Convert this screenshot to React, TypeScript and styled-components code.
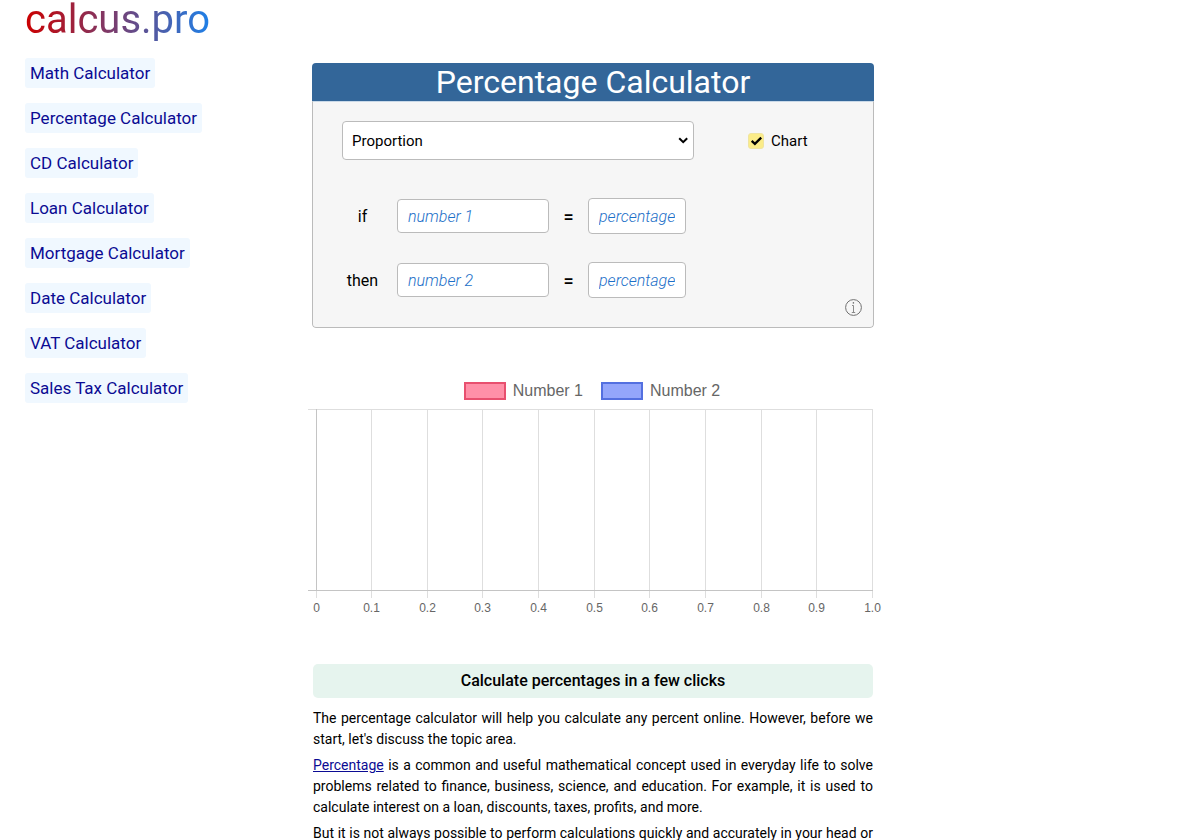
import React, { useState } from "react";
import styled, { createGlobalStyle } from "styled-components";

const GlobalStyle = createGlobalStyle`
  * { box-sizing: border-box; }
  body {
    margin: 0;
    background: #fff;
    color: #000;
    font-family: Roboto, "Liberation Sans", sans-serif;
    font-size: 16px;
  }
  input, select, button { font: inherit; color: inherit; }
`;

const Page = styled.div`
  display: grid;
  grid-template-columns: 287px minmax(0, 562px) 1fr;
  padding-left: 25px;
`;

const Sidebar = styled.aside`
  display: flex;
  flex-direction: column;
  align-items: flex-start;
`;

const Logo = styled.a`
  height: 44px;
  line-height: 40px;
  margin-bottom: 14px;
  font-size: 40px;
  text-decoration: none;
  color: transparent;
  background: linear-gradient(90deg, #cc0000, #1e80e8);
  background-clip: text;
`;

const Nav = styled.nav`
  display: flex;
  flex-direction: column;
  align-items: flex-start;
  gap: 15px;
`;

const NavLink = styled.a`
  padding: 0 5px;
  font-size: 17px;
  line-height: 30px;
  border-radius: 3px;
  background: #f0f8ff;
  color: #0b0b93;
  text-decoration: none;
`;

const Main = styled.main`
  padding-top: 63px;
`;

const Card = styled.section`
  border-radius: 4px;
  overflow: hidden;
`;

const Title = styled.h1`
  margin: 0;
  font-size: 32px;
  font-weight: 400;
  line-height: 38px;
  text-align: center;
  background: #336699;
  color: #fff;
`;

const Form = styled.form`
  display: flex;
  flex-direction: column;
  padding: 19px 11px 11px 29px;
  border: 1px solid #bbb;
  border-top-color: #c9d9e8;
  border-radius: 0 0 4px 4px;
  background: #f6f6f6;
`;

const Options = styled.div`
  display: flex;
  align-items: center;
  gap: 54px;
  margin-bottom: 38px;
  font-size: 15px;
`;

const SelectBox = styled.div`
  position: relative;
  flex: 0 1 352px;
`;

const Select = styled.select`
  display: block;
  width: 100%;
  height: 39px;
  padding: 0 28px 0 9px;
  border: 1px solid #bbb;
  border-radius: 4px;
  background: #fff;
  appearance: none;
`;

const Arrow = styled.svg`
  position: absolute;
  right: 5px;
  top: 15px;
  pointer-events: none;
`;

const CheckLabel = styled.label`
  display: flex;
  align-items: center;
  gap: 7px;
`;

const CheckBox = styled.span`
  display: grid;
  width: 16px;
  height: 16px;

  > * { grid-area: 1 / 1; }
  > svg { pointer-events: none; }
  > input:not(:checked) + svg { visibility: hidden; }
`;

const Check = styled.input`
  width: 16px;
  height: 16px;
  margin: 0;
  border: 1px solid #efe4a0;
  border-radius: 3px;
  background: #fbec88;
  appearance: none;
`;

const Fields = styled.div`
  display: grid;
  gap: 28px;
  margin-bottom: 1px;
`;

const Row = styled.div`
  display: grid;
  grid-template-columns: 55px 152px 39px 98px;
  align-items: center;
  height: 36px;
`;

const RowLabel = styled.label`
  padding-right: 14px;
  text-align: center;
`;

const Equals = styled.span`
  font-size: 18px;
  font-weight: 500;
  text-align: center;
`;

const Field = styled.input<{ $h: number }>`
  width: 100%;
  height: ${(p) => p.$h}px;
  padding: 0 10px;
  border: 1px solid #bbb;
  border-radius: 4px;
  background: #fff;
  &::placeholder {
    color: #1c6fc8;
    font-style: italic;
    font-weight: 300;
    opacity: 1;
  }
`;

const InfoButton = styled.button`
  align-self: flex-end;
  display: block;
  width: 17px;
  height: 17px;
  padding: 0;
  border: 0;
  background: none;
`;

const Chart = styled.figure`
  margin: 53px -8px 0 -4px;
`;

const Legend = styled.figcaption`
  display: flex;
  justify-content: center;
  gap: 18px;
  padding-right: 6px;
  font-family: "Liberation Sans", Arial, sans-serif;
  line-height: 20px;
  color: #666;
`;

const LegendItem = styled.span`
  display: flex;
  align-items: center;
  gap: 7px;
`;

const Swatch = styled.span<{ $fill: string; $line: string }>`
  width: 42px;
  height: 18px;
  border: 2px solid ${(p) => p.$line};
  background: ${(p) => p.$fill};
`;

const Plot = styled.svg`
  display: block;
  width: 100%;
  height: auto;
  margin-top: 8px;
  font-family: "Liberation Sans", Arial, sans-serif;
  font-size: 12px;
`;

const Article = styled.article`
  margin-top: 45px;
  padding: 0 1px;
  font-size: 14px;
  line-height: 21px;
  text-align: justify;
`;

const Heading = styled.h2`
  margin: 0 0 10px;
  font-size: 16px;
  font-weight: 500;
  line-height: 34px;
  text-align: center;
  border-radius: 5px;
  background: #e6f4ee;
`;

const Text = styled.p<{ $full?: boolean }>`
  margin: 0 0 5px;
  text-align-last: ${(p) => (p.$full ? "justify" : "auto")};
`;

const TextLink = styled.a`
  color: #0b0b93;
`;

const calculators = ["Math", "Percentage", "CD", "Loan", "Mortgage", "Date", "VAT", "Sales Tax"];
const ticks = ["0", "0.1", "0.2", "0.3", "0.4", "0.5", "0.6", "0.7", "0.8", "0.9", "1.0"];
const tickX = (i: number) => 8 + Math.floor(i * 55.65);

export default function App() {
  const [chart, setChart] = useState(true);
  return (
    <>
      <GlobalStyle />
      <Page>
        <Sidebar>
          <Logo href="#">calcus.pro</Logo>
          <Nav>
            {calculators.map((name) => (
              <NavLink href="#" key={name}>{name} Calculator</NavLink>
            ))}
          </Nav>
        </Sidebar>
        <Main>
          <Card>
            <Title>Percentage Calculator</Title>
            <Form>
              <Options>
                <SelectBox>
                  <Select aria-label="Calculation">
                    <option>Proportion</option>
                  </Select>
                  <Arrow width="11" height="9" viewBox="0 0 11 9" fill="none" stroke="#000" strokeWidth="2">
                    <path d="M1.2 2.2 5.2 6.2 9.2 2.2" />
                  </Arrow>
                </SelectBox>
                <CheckLabel>
                  <CheckBox>
                    <Check type="checkbox" checked={chart} onChange={(e) => setChart(e.target.checked)} />
                    <svg width="16" height="16" viewBox="0 0 16 16" fill="none" stroke="#000" strokeWidth="2.3">
                      <path d="M3.7 7.8 6.9 10.8 13.2 4.6" />
                    </svg>
                  </CheckBox>
                  Chart
                </CheckLabel>
              </Options>
              <Fields>
                {["if", "then"].map((word, i) => (
                  <Row key={word}>
                    <RowLabel htmlFor={`number-${i}`}>{word}</RowLabel>
                    <Field $h={34} id={`number-${i}`} placeholder={`number ${i + 1}`} />
                    <Equals>=</Equals>
                    <Field $h={36} aria-label={`Percentage ${i + 1}`} placeholder="percentage" />
                  </Row>
                ))}
              </Fields>
              <InfoButton type="button" aria-label="Information">
                <svg width="17" height="17" viewBox="0 0 17 17" fill="none" stroke="#707070">
                  <circle cx="8.5" cy="8.5" r="7.9" />
                  <path d="M7 6.5H8.5V13.2M6.8 13.5H10.2" strokeWidth=".8" />
                  <circle cx="8.4" cy="3.9" r=".8" fill="#707070" stroke="none" />
                </svg>
              </InfoButton>
            </Form>
          </Card>
          {chart && (
            <Chart>
              <Legend>
                <LegendItem><Swatch $fill="#ff90a8" $line="#e8506f" />Number 1</LegendItem>
                <LegendItem><Swatch $fill="#94a6fb" $line="#5470e0" />Number 2</LegendItem>
              </Legend>
              <Plot viewBox="0 0 574 210" role="img" aria-label="Bar chart of the two numbers">
                <g stroke="#dedede">
                  <path d="M0 .5H565" />
                  {ticks.map((t, i) => (
                    <path key={t} d={`M${tickX(i) + 0.5} 0V189`} />
                  ))}
                </g>
                <path d="M0 181.5H565M8.5 0V181" fill="none" stroke="#c4c4c4" />
                <g fill="#666" textAnchor="middle">
                  {ticks.map((t, i) => (
                    <text key={t} x={tickX(i) + 0.5} y="203">{t}</text>
                  ))}
                </g>
              </Plot>
            </Chart>
          )}
          <Article>
            <Heading>Calculate percentages in a few clicks</Heading>
            <Text>
              The percentage calculator will help you calculate any percent online. However, before we
              start, let's discuss the topic area.
            </Text>
            <Text>
              <TextLink href="#">Percentage</TextLink> is a common and useful mathematical concept used in
              everyday life to solve problems related to finance, business, science, and education. For
              example, it is used to calculate interest on a loan, discounts, taxes, profits, and more.
            </Text>
            <Text $full>
              But it is not always possible to perform calculations quickly and accurately in your head or
            </Text>
          </Article>
        </Main>
      </Page>
    </>
  );
}
